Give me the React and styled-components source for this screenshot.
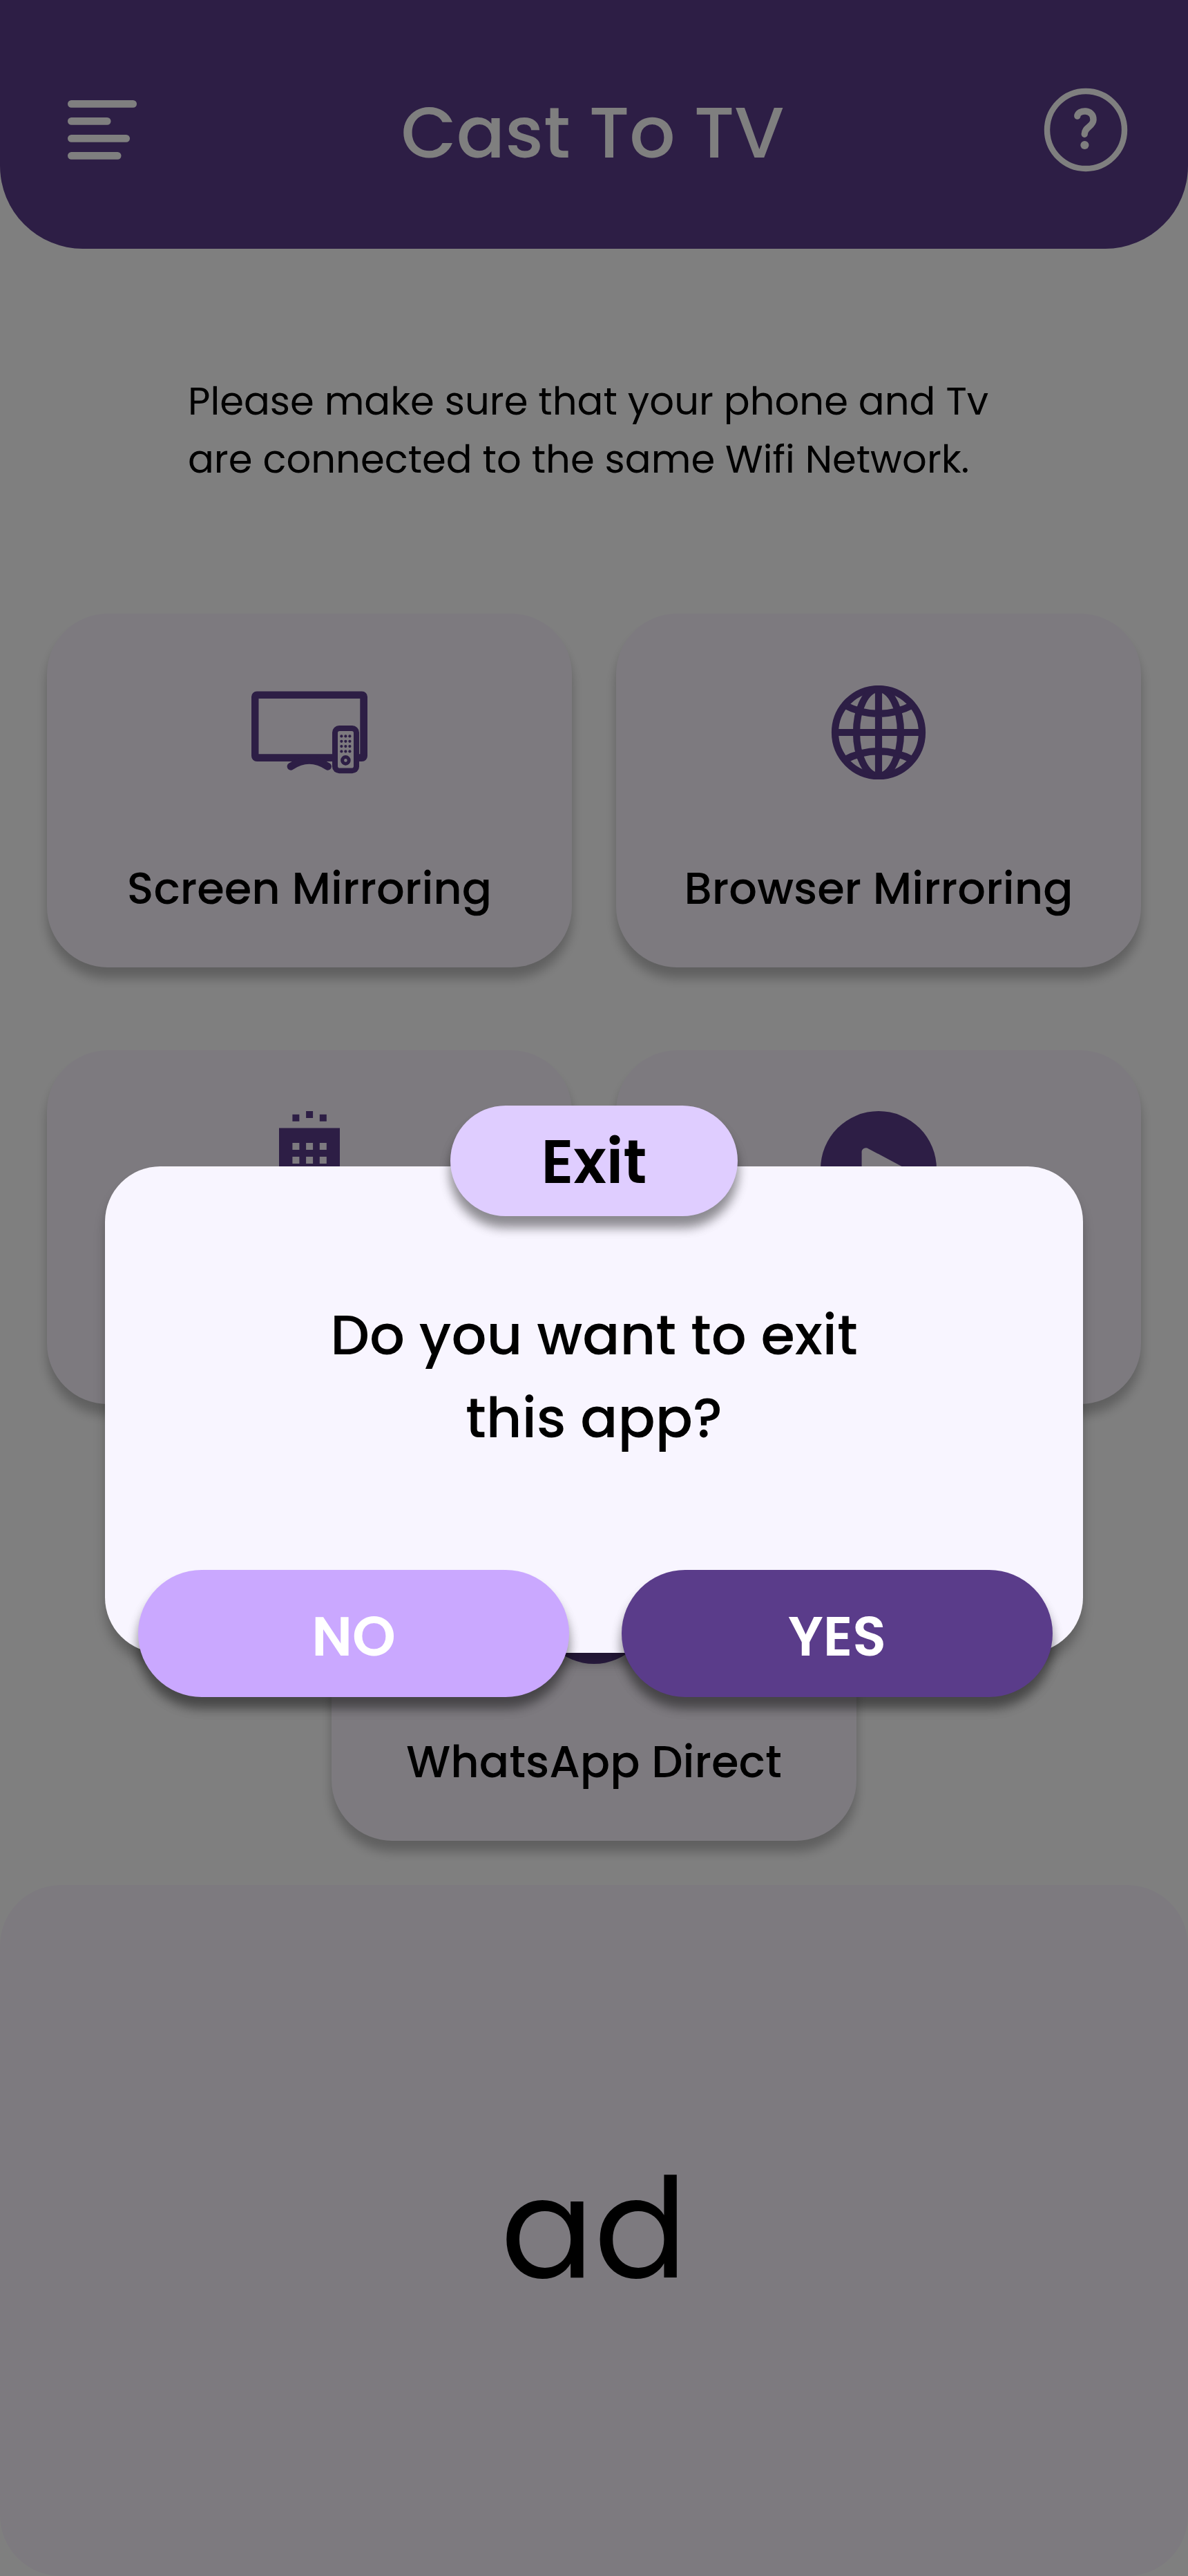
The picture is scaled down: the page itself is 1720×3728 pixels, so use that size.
import React from "react";
import styled, { createGlobalStyle } from "styled-components";

const GlobalStyle = createGlobalStyle`
  *, *::before, *::after { box-sizing: border-box; }
  body { margin: 0; background: #ffffff; }
`;

const PURPLE = "#5a3c8a";
const TILE = "#faf5ff";
const SHADOW = "0 16px 16px rgba(0, 0, 0, 0.25)";

const Screen = styled.main`
  position: relative;
  width: 1720px;
  height: 3728px;
  display: flex;
  flex-direction: column;
  overflow: hidden;
  background: #ffffff;
  color: #000000;
  font-family: Poppins, "Open Sans", sans-serif;
`;

const Header = styled.header`
  display: flex;
  align-items: center;
  justify-content: space-between;
  height: 360px;
  padding: 16px 87px 0 98px;
  border-radius: 0 0 120px 120px;
  background: ${PURPLE};
  color: #ffffff;
`;

const HeaderSide = styled.button`
  display: flex;
  align-items: center;
  justify-content: ${(p) => p.$align};
  width: 122px;
  height: 122px;
  padding: 0;
  border: 0;
  background: none;
  color: inherit;
`;

const Title = styled.h1`
  margin: 8px 0 0;
  padding-right: 15px;
  font-size: 104px;
  font-weight: 500;
  line-height: 156px;
`;

const Notice = styled.p`
  width: 1200px;
  height: 168px;
  margin: 179px 0 181px 272px;
  font-size: 56px;
  line-height: 84px;
`;

const Features = styled.section`
  display: flex;
  flex-direction: column;
  align-items: center;
`;

const FeatureRow = styled.div`
  display: flex;
  gap: 64px;
  margin-bottom: ${(p) => p.$after}px;
`;

const Card = styled.article`
  display: flex;
  flex-direction: column;
  align-items: center;
  width: 760px;
  height: 512px;
  padding-top: 88px;
  border-radius: 88px;
  background: ${TILE};
  box-shadow: ${SHADOW};
  color: ${PURPLE};
`;

const CardLabel = styled.h2`
  margin: 94px 0 0;
  color: #000000;
  font-size: 64px;
  font-weight: 500;
  line-height: 96px;
  white-space: nowrap;
`;

const AdSlot = styled.aside`
  display: flex;
  align-items: center;
  justify-content: center;
  height: 1000px;
  padding-bottom: 4px;
  border-radius: 88px;
  background: ${TILE};
  font-size: 200px;
  line-height: 300px;
`;

const Overlay = styled.div`
  position: absolute;
  inset: 0;
  display: flex;
  flex-direction: column;
  align-items: center;
  padding-top: 1688px;
  background: rgba(0, 0, 0, 0.5);
`;

const Dialog = styled.div`
  display: flex;
  flex-direction: column;
  align-items: center;
  width: 1416px;
  height: 704px;
  border-radius: 80px;
  background: #f8f5ff;
  box-shadow: ${SHADOW};
`;

const DialogBadge = styled.h2`
  flex: none;
  display: flex;
  align-items: center;
  justify-content: center;
  width: 416px;
  height: 160px;
  margin: -88px 0 0;
  padding-top: 3px;
  border-radius: 80px;
  background: #dfcdff;
  box-shadow: ${SHADOW}, ${SHADOW};
  font-size: 88px;
  font-weight: 600;
  line-height: 132px;
`;

const Question = styled.p`
  flex: none;
  width: 860px;
  margin: 112px 0 0;
  text-align: center;
  font-size: 80px;
  font-weight: 500;
  line-height: 120px;
`;

const Actions = styled.div`
  flex: none;
  display: flex;
  gap: 76px;
  margin: 160px 0 0 4px;
`;

const ActionButton = styled.button`
  display: flex;
  align-items: center;
  justify-content: center;
  width: 624px;
  height: 184px;
  padding: 8px 0 0;
  border: 0;
  border-radius: 92px;
  background: ${(p) => (p.$primary ? PURPLE : "#caa8ff")};
  box-shadow: ${SHADOW}, ${SHADOW};
  color: #ffffff;
  font-family: inherit;
  font-size: 80px;
  font-weight: 600;
  line-height: 120px;
`;

const Glyph = styled.svg`
  display: block;
  flex: none;
`;

const MenuIcon = () => (
  <Glyph width="100" height="86" viewBox="0 0 100 86" fill="currentColor">
    <rect width="100" height="10.8" rx="5.4" />
    <rect y="25" width="62.5" height="10.8" rx="5.4" />
    <rect y="50" width="90" height="10.8" rx="5.4" />
    <rect y="75" width="77.5" height="10.8" rx="5.4" />
  </Glyph>
);

const HelpIcon = () => (
  <Glyph width="122" height="122" viewBox="0 0 122 122" fill="none">
    <circle cx="61" cy="61" r="56" stroke="currentColor" strokeWidth="8.4" />
    <path
      d="M48.8 41 C49.8 31.4 72.4 30.2 72 46.5 C71.6 56.5 59.4 56.4 59.2 67.2"
      stroke="currentColor"
      strokeWidth="9.4"
      strokeLinecap="round"
    />
    <circle cx="59.4" cy="83" r="6.1" fill="currentColor" />
  </Glyph>
);

const ScreenIcon = () => {
  const keys = [];
  for (const y of [89.4, 96.8, 104.1, 111.4]) {
    for (const x of [130.4, 136.4, 142.4]) {
      keys.push(<circle key={`${x}-${y}`} cx={x} cy={y} r="2.1" />);
    }
  }
  return (
    <Glyph width="168" height="168" viewBox="0 0 168 168" fill="currentColor">
      <path
        fillRule="evenodd"
        d="M8 24.4 H160 A8 8 0 0 1 168 32.4 V118 A8 8 0 0 1 160 126 H8 A8 8 0 0 1 0 118 V32.4 A8 8 0 0 1 8 24.4 Z M10.5 35 V115.3 H157.3 V35 Z"
      />
      <path
        d="M57 133.3 Q83.7 115.2 110.6 133.3"
        fill="none"
        stroke="currentColor"
        strokeWidth="10.8"
        strokeLinecap="round"
      />
      <path d="M57 125 H111 L104 128.5 H64 Z" />
      <rect x="117" y="74" width="39" height="69.3" rx="10" />
      <rect x="125" y="82" width="23" height="53.5" rx="2.8" fill={TILE} />
      {keys}
      <circle cx="136.4" cy="124.4" r="4.8" fill="none" stroke="currentColor" strokeWidth="5" />
    </Glyph>
  );
};

const GlobeIcon = () => (
  <Glyph
    width="168"
    height="168"
    viewBox="0 0 168 168"
    fill="none"
    stroke="currentColor"
    strokeWidth="10.2"
  >
    <circle cx="84" cy="84" r="63" />
    <ellipse cx="84" cy="84" rx="32" ry="63" />
    <path d="M84 21 V147 M21 84 H147 M33 43.5 Q84 70.5 135 43.5 M33 124.5 Q84 97.5 135 124.5" />
  </Glyph>
);

const RemoteIcon = () => {
  const xs = [39.4, 59.1, 78.8];
  return (
    <Glyph width="88" height="168" viewBox="20 0 88 168" fill="currentColor">
      <rect x={xs[0]} y="4.8" width="10" height="10" />
      <rect x={xs[1]} y="0" width="10" height="10" />
      <rect x={xs[2]} y="4.8" width="10" height="10" />
      <rect x="20" y="24.5" width="88" height="140" />
      {[46, 66, 86].map((y) =>
        xs.map((x) => <rect key={`${x}-${y}`} x={x} y={y} width="10" height="10" fill={TILE} />)
      )}
    </Glyph>
  );
};

const PlayIcon = () => (
  <Glyph width="168" height="168" viewBox="0 0 168 168">
    <circle cx="84" cy="84" r="84" fill="currentColor" />
    <path
      d="M59.6 60 A6.2 6.2 0 0 1 69.4 54.4 L125 84 L69.4 113.6 A6.2 6.2 0 0 1 59.6 108 Z"
      fill={TILE}
    />
  </Glyph>
);

const ChatIcon = () => (
  <Glyph width="168" height="168" viewBox="0 0 168 168">
    <circle cx="84" cy="84" r="84" fill="currentColor" />
  </Glyph>
);

const Feature = ({ icon: Icon, label }) => (
  <Card>
    <Icon />
    {label && <CardLabel>{label}</CardLabel>}
  </Card>
);

export default function App() {
  return (
    <Screen>
      <GlobalStyle />
      <Header>
        <HeaderSide $align="flex-start">
          <MenuIcon />
        </HeaderSide>
        <Title>Cast To TV</Title>
        <HeaderSide $align="flex-end">
          <HelpIcon />
        </HeaderSide>
      </Header>
      <Notice>
        Please make sure that your phone and Tv
        <br />
        are connected to the same Wifi Network.
      </Notice>
      <Features>
        <FeatureRow $after={120}>
          <Feature icon={ScreenIcon} label="Screen Mirroring" />
          <Feature icon={GlobeIcon} label="Browser Mirroring" />
        </FeatureRow>
        <FeatureRow $after={120}>
          <Feature icon={RemoteIcon} />
          <Feature icon={PlayIcon} />
        </FeatureRow>
        <FeatureRow $after={64}>
          <Feature icon={ChatIcon} label="WhatsApp Direct" />
        </FeatureRow>
      </Features>
      <AdSlot>ad</AdSlot>
      <Overlay>
        <Dialog role="dialog">
          <DialogBadge>Exit</DialogBadge>
          <Question>
            Do you want to exit
            <br />
            this app?
          </Question>
          <Actions>
            <ActionButton>NO</ActionButton>
            <ActionButton $primary>YES</ActionButton>
          </Actions>
        </Dialog>
      </Overlay>
    </Screen>
  );
}
